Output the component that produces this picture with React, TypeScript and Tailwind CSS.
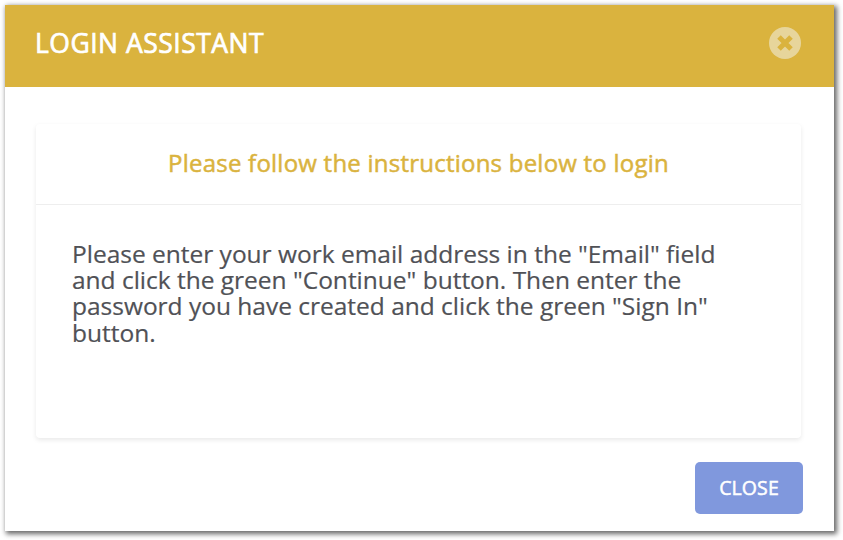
function App() {
  return (
    <div className="h-[540px] w-[843px] overflow-hidden bg-white pl-[5px] pt-[5px] font-['Open_Sans',sans-serif]">
      <div className="flex h-[526px] w-[829px] flex-col bg-white shadow-[2px_2px_5px_1px_rgba(0,0,0,0.6)]">
        <div className="flex h-[82px] items-center justify-between bg-[#dab33e] pb-[6px] pl-[30px] pr-[33px]">
          <h1 className="text-[26.5px] font-medium leading-none tracking-[0.5px] text-white [-webkit-text-stroke:0.7px_white]">LOGIN ASSISTANT</h1>
          <button type="button" aria-label="Close">
            <svg width="32" height="32" viewBox="0 0 32 32">
              <circle cx="16" cy="16" r="16" fill="#e7d59b" />
              <path d="M10 10 L22 22 M22 10 L10 22" stroke="#dab33e" strokeWidth="5" />
            </svg>
          </button>
        </div>
        <div className="mx-[31px] mt-[37px] h-[314px] w-[765px] rounded bg-white shadow-[0_2px_5px_rgba(0,0,0,0.09)]">
          <div className="flex h-[81px] items-center justify-center border-b border-[#eeeeee]">
            <h2 className="whitespace-nowrap pb-[2px] text-[24px] font-medium leading-none tracking-[0.23px] text-[#dab33e] [-webkit-text-stroke:0.5px_#dab33e]">Please follow the instructions below to login</h2>
          </div>
          <p className="whitespace-nowrap pl-[36px] pt-[36px] text-[24.5px] leading-[26.2px] tracking-[-0.01px] text-[#505156] [-webkit-text-stroke:0.2px_#505156]">
            Please enter your work email address in the "Email" field<br />
            and click the green "Continue" button. Then enter the<br />
            password you have created and click the green "Sign In"<br />
            button.
          </p>
        </div>
        <div className="flex justify-end pr-[31px] pt-[24px]">
          <button type="button" className="h-[52px] w-[108px] rounded-[5px] bg-[#8098dd] text-[19.5px] font-medium tracking-[0.1px] text-white [-webkit-text-stroke:0.5px_white]">CLOSE</button>
        </div>
      </div>
    </div>
  );
}
export default App;
